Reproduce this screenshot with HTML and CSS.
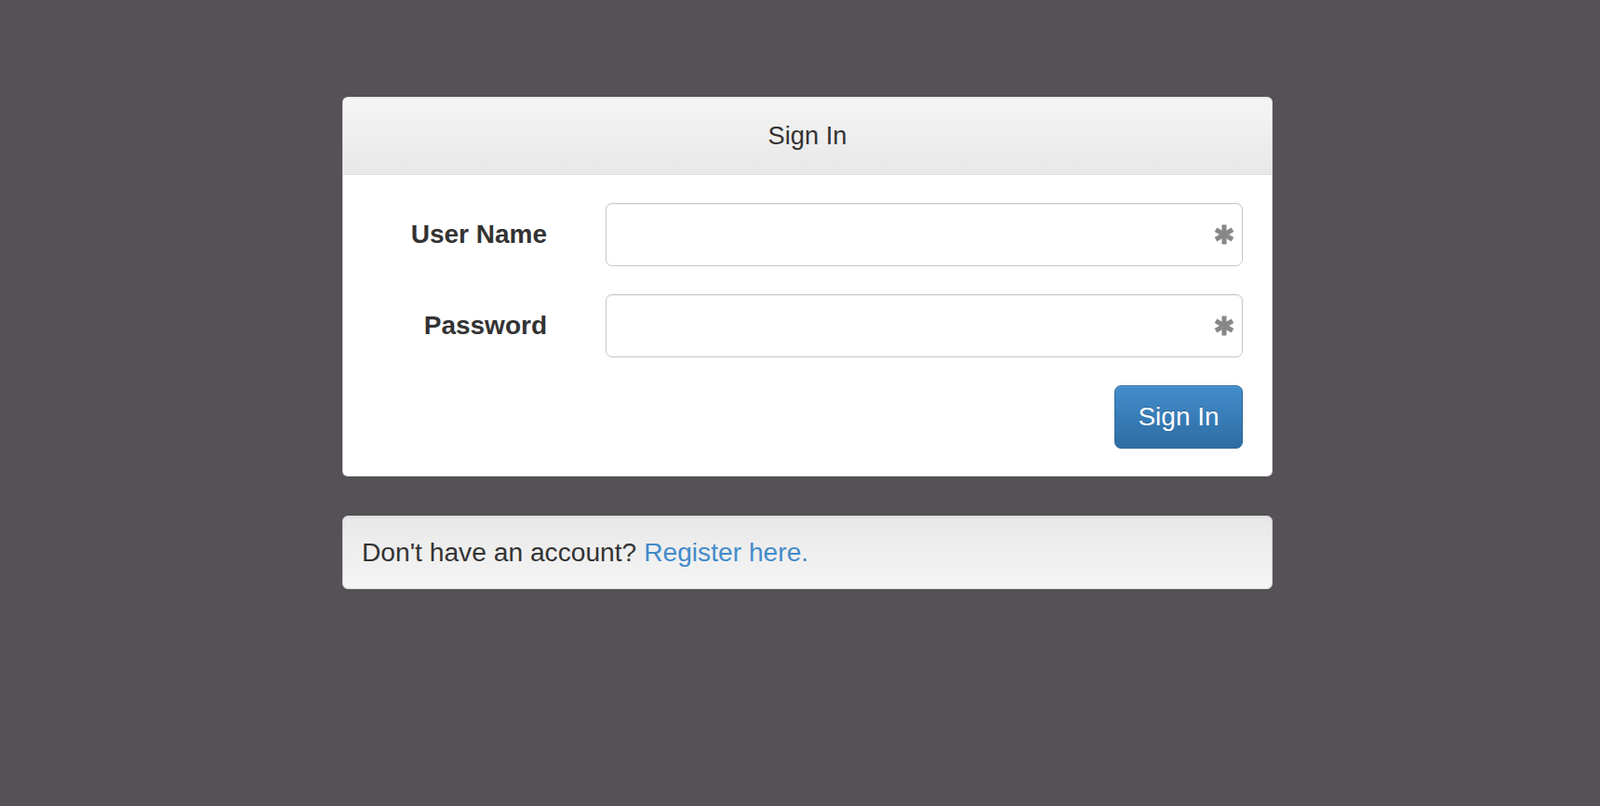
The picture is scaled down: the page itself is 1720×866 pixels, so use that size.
FILE: index.html
```html
<!DOCTYPE html>
<html lang="en">
<head>
<meta charset="utf-8">
<title>Sign In</title>
<link rel="stylesheet" href="styles.css">
</head>
<body>
<div class="page">
  <div class="panel">
    <div class="panel-heading">Sign In</div>
    <form class="panel-body">
      <div class="form-row">
        <label class="form-label" for="username">User Name</label>
        <div class="field">
          <input class="form-control" id="username" type="text">
          <svg class="required" viewBox="0 0 20 20" aria-hidden="true">
            <g stroke="#888" stroke-width="4.6" stroke-linecap="butt">
              <line x1="10" y1="0.5" x2="10" y2="19.5"/>
              <line x1="1.8" y1="5.2" x2="18.2" y2="14.8"/>
              <line x1="1.8" y1="14.8" x2="18.2" y2="5.2"/>
            </g>
          </svg>
        </div>
      </div>
      <div class="form-row">
        <label class="form-label" for="password">Password</label>
        <div class="field">
          <input class="form-control" id="password" type="password">
          <svg class="required" viewBox="0 0 20 20" aria-hidden="true">
            <g stroke="#888" stroke-width="4.6" stroke-linecap="butt">
              <line x1="10" y1="0.5" x2="10" y2="19.5"/>
              <line x1="1.8" y1="5.2" x2="18.2" y2="14.8"/>
              <line x1="1.8" y1="14.8" x2="18.2" y2="5.2"/>
            </g>
          </svg>
        </div>
      </div>
      <div class="form-actions">
        <button class="btn-primary" type="button">Sign In</button>
      </div>
    </form>
  </div>
  <div class="well">Don't have an account? <a class="link" href="#">Register here.</a></div>
</div>
</body>
</html>
```
FILE: styles.css
```css
html, body {
  margin: 0;
  padding: 0;
}
body {
  background: #555157;
  font-family: "Liberation Sans", Arial, Helvetica, sans-serif;
  color: #333;
  min-height: 866px;
}
.page {
  padding: 104px 0 0 368px;
  width: 1000px;
}
.panel {
  background: #fff;
  border: 1px solid #ddd;
  border-bottom-color: #d4d4d4;
  border-radius: 6px;
  box-shadow: 0 1px 2px rgba(0,0,0,.05);
  overflow: hidden;
}
.panel-heading {
  background: linear-gradient(to bottom, #f5f5f5 0, #e8e8e8 100%);
  border-bottom: 1px solid #ddd;
  text-align: center;
  font-size: 27.3px;
  line-height: 38px;
  padding: 22px 15px;
  color: #333;
}
.panel-body {
  display: flex;
  flex-direction: column;
  gap: 30px;
  padding: 30px 31px 29px 0;
  margin: 0;
}
.form-row {
  display: flex;
  align-items: center;
  gap: 63px;
}
.form-label {
  width: 219px;
  text-align: right;
  font-weight: bold;
  font-size: 28px;
  color: #333;
}
.field {
  flex: 1;
  position: relative;
  display: flex;
}
.form-control {
  flex: 1;
  box-sizing: border-box;
  height: 68px;
  border: 1px solid #c8c8c8;
  border-radius: 7px;
  box-shadow: inset 0 1px 1px rgba(0,0,0,.075);
  background: #fff;
  font-family: inherit;
  font-size: 27px;
  padding: 0 50px 0 18px;
  outline: none;
}
.required {
  position: absolute;
  right: 9px;
  top: 23px;
  width: 22px;
  height: 22px;
}
.form-actions {
  display: flex;
  justify-content: flex-end;
}
.btn-primary {
  box-sizing: border-box;
  width: 138px;
  height: 68px;
  border: 1px solid #2b669a;
  border-radius: 7px;
  background: linear-gradient(to bottom, #438dcd 0, #2d6ca2 100%);
  box-shadow: inset 0 1px 0 rgba(255,255,255,.15), 0 1px 1px rgba(0,0,0,.075);
  color: #fff;
  font-family: inherit;
  font-size: 28px;
  text-shadow: 0 -1px 0 rgba(0,0,0,.2);
  padding: 0;
  cursor: pointer;
}
.well {
  margin-top: 42px;
  background: linear-gradient(to bottom, #e8e8e8 0, #f5f5f5 100%);
  border: 1px solid #dcdcdc;
  border-radius: 6px;
  box-shadow: inset 0 1px 3px rgba(0,0,0,.05);
  font-size: 28.2px;
  line-height: 39px;
  padding: 19px 20px;
  color: #333;
}
.link {
  color: #428bca;
  text-decoration: none;
}
```
